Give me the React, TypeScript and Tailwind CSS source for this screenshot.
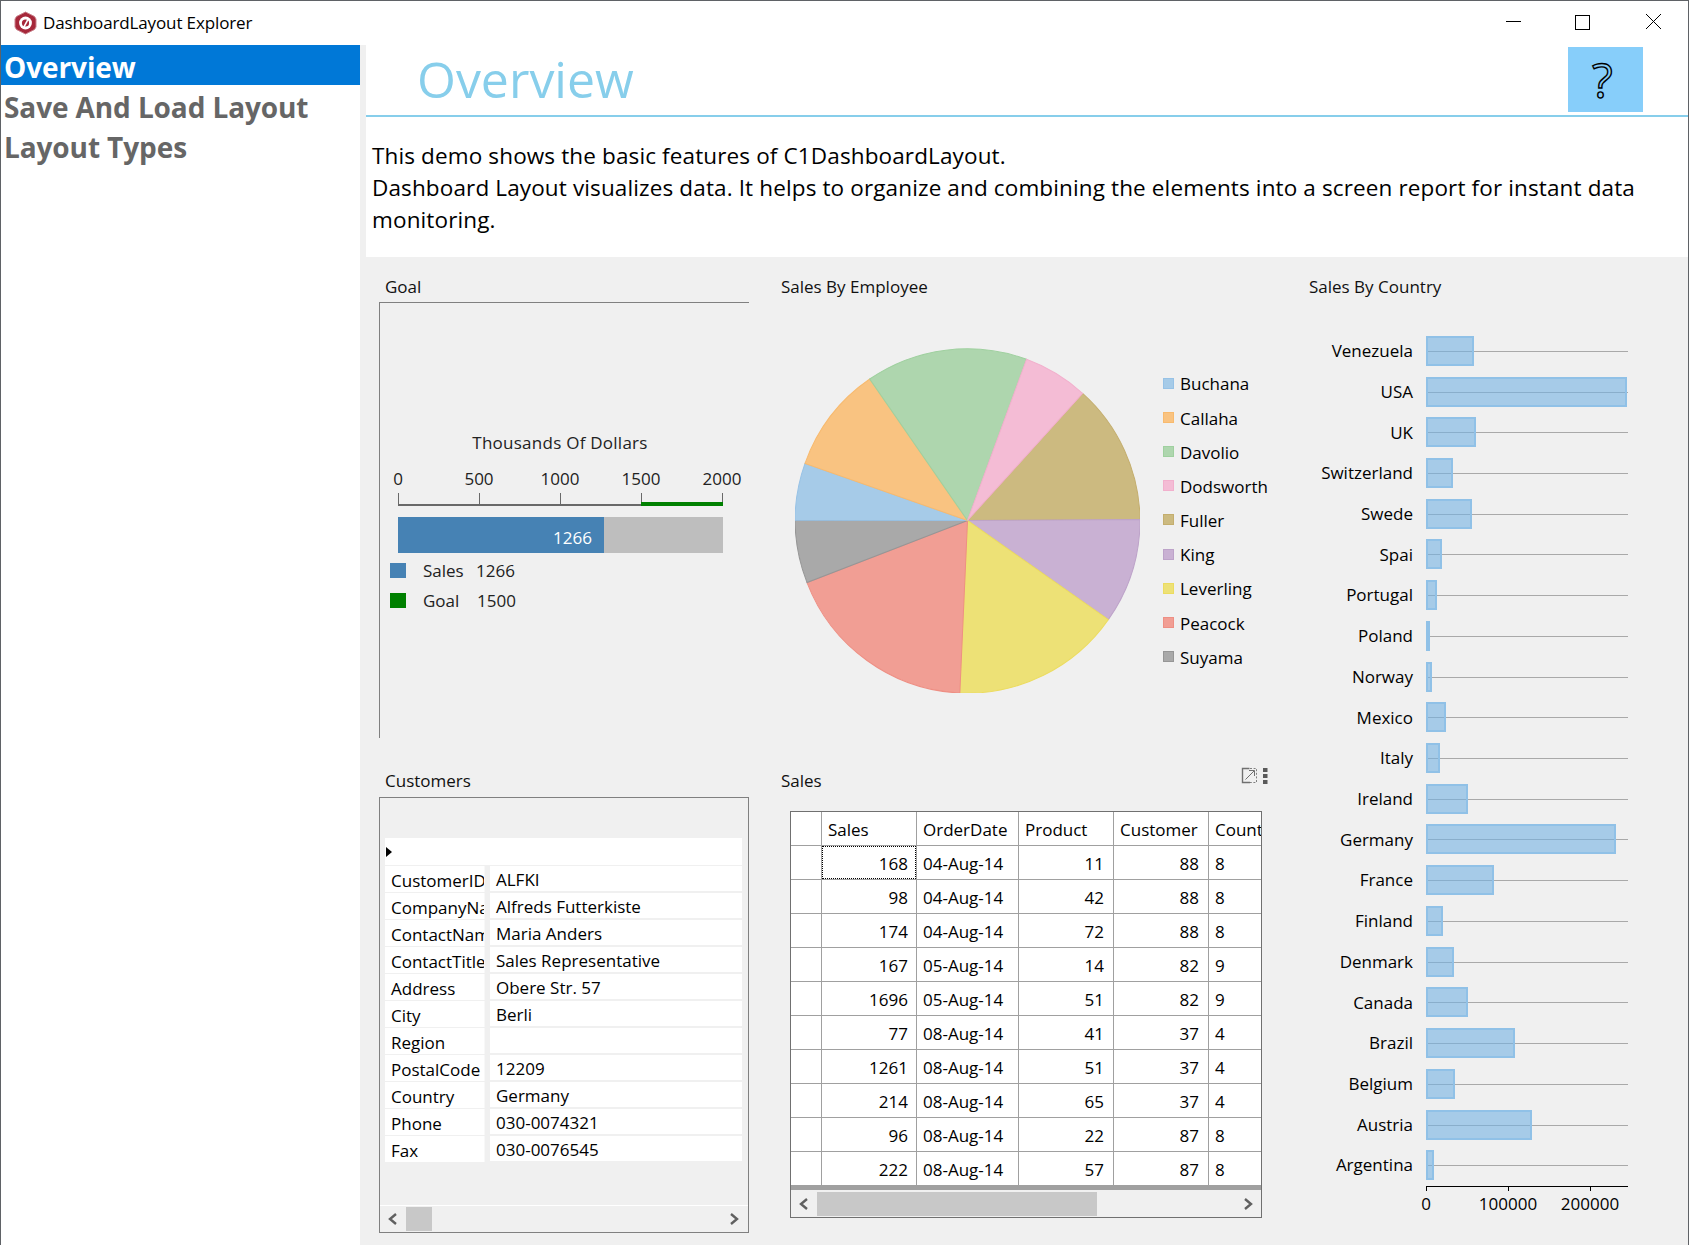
import React from "react";

const pie = [
  { n: "Fuller", a: "908 190", b: "1080 568", f: "#ccba80", s: "#c4ae6e" },
  { n: "King", a: "1080 568", b: "985 868", f: "#c9b1d3", s: "#bda3c9" },
  { n: "Leverling", a: "985 868", b: "540 1088", f: "#ede176", s: "#ecdc60" },
  { n: "Peacock", a: "540 1088", b: "82 757", f: "#f19e94", s: "#ee8f84" },
  { n: "Suyama", a: "82 757", b: "46 570", f: "#a9a9a9", s: "#969696" },
  { n: "Buchana", a: "46 570", b: "76 400", f: "#a6cbe8", s: "#97c2e6" },
  { n: "Callaha", a: "76 400", b: "270 147", f: "#f9c381", s: "#f8ba6e" },
  { n: "Davolio", a: "270 147", b: "740 88", f: "#aed6ae", s: "#9fd09f" },
  { n: "Dodsworth", a: "740 88", b: "908 190", f: "#f4bcd5", s: "#f2b0cd" },
];
const legend = ["Buchana", "Callaha", "Davolio", "Dodsworth", "Fuller", "King", "Leverling", "Peacock", "Suyama"].map(
  (n) => pie.find((p) => p.n === n)!
);

const countries: [string, number][] = [
  ["Venezuela", 48], ["USA", 201], ["UK", 50], ["Switzerland", 27], ["Swede", 46], ["Spai", 16], ["Portugal", 11],
  ["Poland", 4], ["Norway", 6], ["Mexico", 20], ["Italy", 14], ["Ireland", 42], ["Germany", 190], ["France", 68],
  ["Finland", 17], ["Denmark", 28], ["Canada", 42], ["Brazil", 89], ["Belgium", 29], ["Austria", 106], ["Argentina", 8],
];

const customers = [
  ["CustomerID", "ALFKI"], ["CompanyName", "Alfreds Futterkiste"], ["ContactName", "Maria Anders"],
  ["ContactTitle", "Sales Representative"], ["Address", "Obere Str. 57"], ["City", "Berli"], ["Region", ""],
  ["PostalCode", "12209"], ["Country", "Germany"], ["Phone", "030-0074321"], ["Fax", "030-0076545"],
];

const sales = [
  [168, "04-Aug-14", 11, 88, 8], [98, "04-Aug-14", 42, 88, 8], [174, "04-Aug-14", 72, 88, 8],
  [167, "05-Aug-14", 14, 82, 9], [1696, "05-Aug-14", 51, 82, 9], [77, "08-Aug-14", 41, 37, 4],
  [1261, "08-Aug-14", 51, 37, 4], [214, "08-Aug-14", 65, 37, 4], [96, "08-Aug-14", 22, 87, 8],
  [222, "08-Aug-14", 57, 87, 8],
];

function Chevron({ dir }: { dir: "l" | "r" }) {
  return (
    <svg width="10" height="12" viewBox="0 0 10 12" className="shrink-0">
      <polyline
        points={dir === "l" ? "8,1 2,6 8,11" : "2,1 8,6 2,11"}
        fill="none"
        stroke="#606060"
        strokeWidth="2.4"
      />
    </svg>
  );
}

function Label({ children, lift }: { children: React.ReactNode; lift?: boolean }) {
  return (
    <div className={`h-8 flex items-center pl-[6px] text-[17px] leading-none text-[#111] ${lift ? "pb-[2px]" : ""}`}>
      {children}
    </div>
  );
}

export default function App() {
  return (
    <div className="w-[1689px] h-[1245px] overflow-hidden bg-white border-t border-l border-r border-[#5f6266] flex flex-col font-['Open_Sans',sans-serif] text-black">
      <div className="h-[44px] shrink-0 flex items-center pl-[13px]">
        <svg width="23" height="24" viewBox="0 0 23 24" className="shrink-0">
          <polygon
            points="11.5,1 20.5,5.5 22,8 22,16 20.5,18.5 11.5,23 2.5,18.5 1,16 1,8 2.5,5.5"
            fill="#a6283a"
            stroke="#c9808a"
            strokeWidth="1"
            strokeLinejoin="round"
          />
          <circle cx="11.5" cy="12" r="6.4" fill="#fff" />
          <circle cx="11.5" cy="12" r="3.6" fill="#a6283a" />
          <path d="M14.4 7.6 L9.6 16.6" stroke="#fff" strokeWidth="1.6" />
        </svg>
        <span className="ml-[6px] text-[17px] tracking-[-0.13px]">DashboardLayout Explorer</span>
        <div className="ml-auto flex items-center">
          <div className="w-[15px] h-px bg-black mr-[54px] mt-[-3px]" />
          <div className="w-[15px] h-[15px] border-[1.4px] border-black mr-[56px] mt-[-2px]" />
          <svg width="15" height="15" viewBox="0 0 15 15" className="mr-[27px] mt-[-3px]">
            <path d="M0 0 L15 15 M15 0 L0 15" stroke="#000" strokeWidth="1" />
          </svg>
        </div>
      </div>

      <div className="flex-1 flex min-h-0 bg-[#f0f0f0]">
        <div className="w-[359px] shrink-0 bg-white font-bold text-[28px] text-[#666] tracking-[-0.1px]">
          <div className="h-10 flex items-center pl-[3px] pt-[3px] bg-[#0078d7] text-white">Overview</div>
          <div className="h-10 flex items-center pl-[3px] pt-[3px]">Save And Load Layout</div>
          <div className="h-10 flex items-center pl-[3px] pt-[3px]">Layout Types</div>
        </div>

        <div className="ml-[6px] flex-1 flex flex-col min-w-0">
          <div className="bg-white h-[72px] shrink-0 border-b-2 border-[#87ceeb] flex justify-between items-start pl-[51px]">
            <div className="text-[50px] leading-[64px] mt-[2px] text-[#87ceeb]">Overview</div>
            <div className="w-[75px] h-[65px] mt-[2px] mr-[45px] bg-[#87cefa] flex items-center justify-start pl-[24px] text-[48px] leading-none text-[#87cefa] [-webkit-text-stroke:1.4px_black]">
              ?
            </div>
          </div>
          <div className="bg-white h-[140px] shrink-0 pt-[23px] pl-[6px] text-[22.5px] leading-8 tracking-[0.13px]">
            <div>This demo shows the basic features of C1DashboardLayout.</div>
            <div className="w-[1290px]">
              Dashboard Layout visualizes data. It helps to organize and combining the elements into a screen report for instant data monitoring.
            </div>
          </div>

          <div className="flex-1 pt-[13px] pl-[13px] grid grid-cols-[396px_528px_1fr] grid-rows-[495px_1fr]">
            {/* Goal */}
            <div>
              <Label>Goal</Label>
              <div className="w-[370px] h-[436px] border-l border-t border-[#808080]">
                <svg width="369" height="435" viewBox="0 0 369 435" className="block">
                  <g fontFamily="'Open Sans', sans-serif" fontSize="17" fill="#222">
                    <text x="180" y="146" textAnchor="middle" letterSpacing="0.25">Thousands Of Dollars</text>
                    {[["0", 18], ["500", 99], ["1000", 180], ["1500", 261], ["2000", 342]].map(([t, x]) => (
                      <text key={t} x={x} y="182" textAnchor="middle">{t}</text>
                    ))}
                    <path d="M18 202 H261" stroke="#696969" strokeWidth="2" />
                    {[18.5, 99.5, 180.5, 261.5, 342.5].map((x) => (
                      <path key={x} d={`M${x} 190 V203`} stroke="#696969" strokeWidth="1" />
                    ))}
                    <rect x="261" y="199" width="82" height="4" fill="#008000" />
                    <rect x="18" y="214" width="206" height="36" fill="#4682b4" />
                    <rect x="224" y="214" width="119" height="36" fill="#bebebe" />
                    <text x="212" y="241" textAnchor="end" fill="#fff">1266</text>
                    <rect x="10" y="260" width="16" height="15" fill="#4682b4" />
                    <rect x="10" y="290" width="16" height="15" fill="#008000" />
                    <text x="43" y="274">Sales</text>
                    <text x="96" y="274">1266</text>
                    <text x="43" y="304">Goal</text>
                    <text x="97" y="304">1500</text>
                  </g>
                </svg>
              </div>
            </div>

            {/* Sales by employee */}
            <div>
              <Label>Sales By Employee</Label>
              <div className="flex items-start mt-[46px] ml-5">
                <svg width="345" height="345" viewBox="46 54 1034 1034" className="shrink-0">
                  {pie.map((p) => (
                    <path
                      key={p.n}
                      d={`M563 571 L${p.a} A517 517 0 0 1 ${p.b} Z`}
                      fill={p.f}
                      stroke={p.s}
                      strokeWidth="3"
                    />
                  ))}
                </svg>
                <div className="ml-[23px] mt-[18px] text-[17px]">
                  {legend.map((p) => (
                    <div key={p.n} className="h-[34.2px] flex items-center">
                      <span className="w-[11px] h-[11px] mr-[6px] border" style={{ backgroundColor: p.f, borderColor: p.s }} />
                      <span className="relative top-px">{p.n}</span>
                    </div>
                  ))}
                </div>
              </div>
            </div>

            {/* Sales by country */}
            <div className="row-span-2">
              <Label>Sales By Country</Label>
              <div className="mt-[28.5px] text-[17px]">
                {countries.map(([n, w]) => (
                  <div key={n} className="h-[40.72px] flex items-center">
                    <div className="w-[110px] text-right whitespace-nowrap">{n}</div>
                    <div className="ml-[13px] w-[202px] h-[30px] relative flex items-center">
                      <div className="absolute left-0 right-0 top-[15px] h-px bg-[#a9a9a9]" />
                      <div
                        className="h-[30px] relative bg-[rgba(117,178,227,0.6)] border-2 border-[#90c1e7]"
                        style={{ width: w }}
                      />
                    </div>
                  </div>
                ))}
                <div className="ml-[123px] w-[202px] border-t border-black relative h-6">
                  <div className="absolute left-0 top-0 w-px h-1 bg-black" />
                  <div className="absolute left-[82px] top-0 w-px h-1 bg-black" />
                  <div className="absolute left-[164px] top-0 w-px h-1 bg-black" />
                </div>
                <div className="ml-[123px] w-[202px] mt-[-19px] relative h-6">
                  <span className="absolute left-0 -translate-x-1/2">0</span>
                  <span className="absolute left-[82px] -translate-x-1/2">100000</span>
                  <span className="absolute left-[164px] -translate-x-1/2">200000</span>
                </div>
              </div>
            </div>

            {/* Customers */}
            <div>
              <Label lift>Customers</Label>
              <div className="w-[370px] h-[436px] border border-[#808080] flex flex-col">
                <div className="flex-1 pt-10 pl-[5px] pr-[6px] text-[17px]">
                  <div className="h-[27px] bg-white flex items-center pl-px mb-px">
                    <div className="w-0 h-0 border-y-[5.5px] border-y-transparent border-l-[6px] border-l-black" />
                  </div>
                  {customers.map(([k, v]) => (
                    <div key={k} className="h-[27px] flex items-start">
                      <div className="w-[100px] h-[26px] bg-white border-r border-[#f8f8f8] overflow-hidden whitespace-nowrap pl-[6px] leading-[30px]">
                        {k}
                      </div>
                      <div className="ml-[5px] flex-1 h-[25px] bg-white pl-[6px] leading-[27px]">{v}</div>
                    </div>
                  ))}
                </div>
                <div className="h-[27px] border-t border-white flex items-center justify-between pl-[8px] pr-[9px]">
                  <div className="flex items-center">
                    <Chevron dir="l" />
                    <div className="ml-[8px] w-[26px] h-[24px] bg-[#c8c8c8]" />
                  </div>
                  <Chevron dir="r" />
                </div>
              </div>
            </div>

            {/* Sales grid */}
            <div className="relative">
              <Label lift>Sales</Label>
              <svg width="28" height="18" viewBox="0 0 28 18" className="absolute left-[466px] top-[2px]">
                <path d="M8.5 1.5 H1.5 V15.5 H9" fill="none" stroke="#707070" strokeWidth="1.4" />
                <path d="M9 1.5 H15.5 V15.5 H9" fill="none" stroke="#808080" strokeDasharray="2 1.6" />
                <path d="M4.5 12.5 L13 4 M8 3.5 H13.5 V9" fill="none" stroke="#707070" />
                <rect x="22" y="1" width="4.5" height="4" fill="#5a5a5a" />
                <rect x="22" y="7" width="4.5" height="4" fill="#5a5a5a" />
                <rect x="22" y="13" width="4.5" height="4" fill="#5a5a5a" />
              </svg>
              <div className="ml-[15px] mt-[14px] w-[472px] h-[407px] border border-[#707070] flex flex-col text-[17px]">
                <div className="h-[34px] bg-white flex border-b border-[#a0a0a0] overflow-hidden">
                  <div className="w-[31px] shrink-0 border-r border-[#a0a0a0]" />
                  <div className="w-[95px] shrink-0 border-r border-[#a0a0a0] pl-[6px] leading-[35px]">Sales</div>
                  <div className="w-[102px] shrink-0 border-r border-[#a0a0a0] pl-[6px] leading-[35px]">OrderDate</div>
                  <div className="w-[95px] shrink-0 border-r border-[#a0a0a0] pl-[6px] leading-[35px]">Product</div>
                  <div className="w-[95px] shrink-0 border-r border-[#a0a0a0] pl-[6px] leading-[35px]">Customer</div>
                  <div className="pl-[6px] leading-[35px] whitespace-nowrap">Country</div>
                </div>
                {sales.map((r, i) => (
                  <div key={i} className="h-[34px] bg-white flex border-b border-[#a0a0a0] overflow-hidden">
                    <div className="w-[31px] shrink-0 border-r border-[#a0a0a0]" />
                    <div className="w-[95px] shrink-0 border-r border-[#a0a0a0] relative text-right pr-[8px] leading-[35px]">
                      {i === 0 && <div className="absolute inset-0 border border-dotted border-black" />}
                      {r[0]}
                    </div>
                    <div className="w-[102px] shrink-0 border-r border-[#a0a0a0] pl-[6px] leading-[35px]">{r[1]}</div>
                    <div className="w-[95px] shrink-0 border-r border-[#a0a0a0] text-right pr-[9px] leading-[35px]">{r[2]}</div>
                    <div className="w-[95px] shrink-0 border-r border-[#a0a0a0] text-right pr-[9px] leading-[35px]">{r[3]}</div>
                    <div className="pl-[6px] leading-[35px]">{r[4]}</div>
                  </div>
                ))}
                <div className="flex-1 border-t-4 border-[#a0a0a0] flex items-center justify-between pl-[8px] pr-[8px]">
                  <div className="flex items-center">
                    <Chevron dir="l" />
                    <div className="ml-[8px] w-[280px] h-6 bg-[#c8c8c8]" />
                  </div>
                  <Chevron dir="r" />
                </div>
              </div>
            </div>
          </div>
        </div>
      </div>
    </div>
  );
}
